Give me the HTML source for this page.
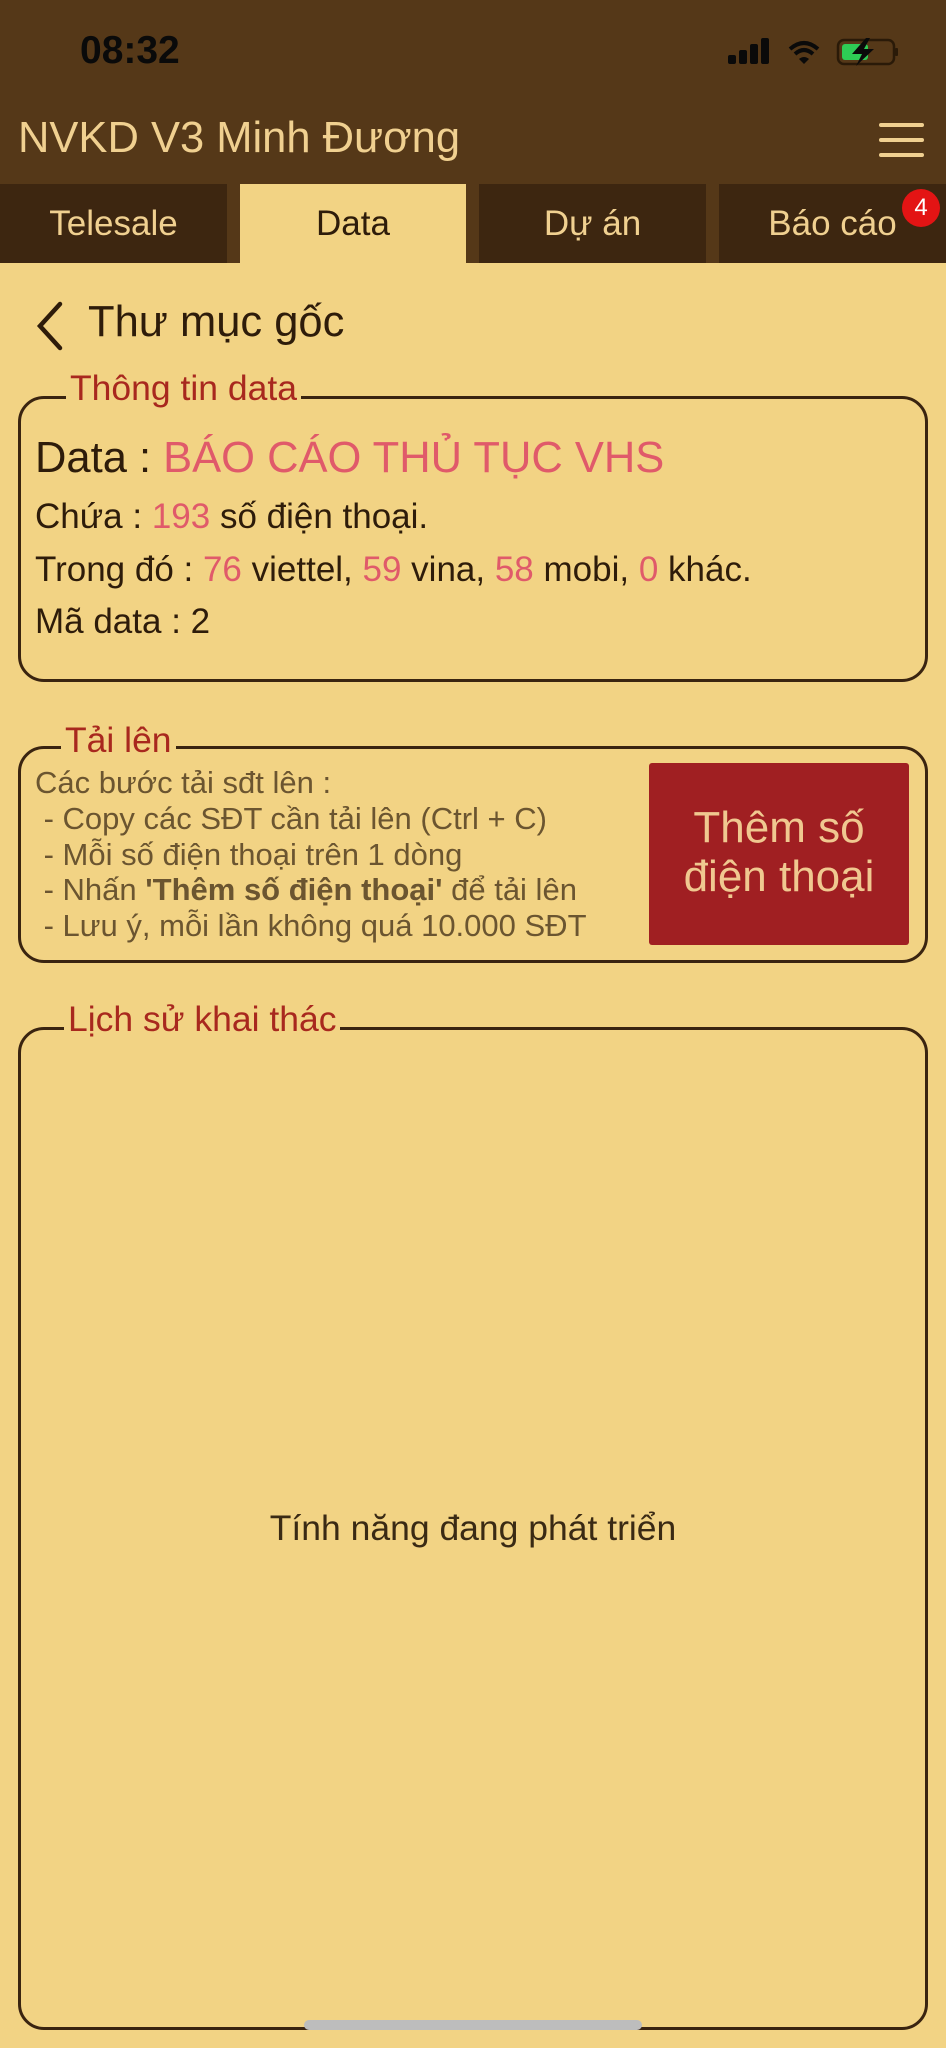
<!DOCTYPE html>
<html><head><meta charset="utf-8"><style>
*{margin:0;padding:0;box-sizing:border-box}
body{width:946px;height:2048px;background:#f2d384;font-family:"Liberation Sans",sans-serif;position:relative;overflow:hidden}
.a{position:absolute;white-space:nowrap}
.hdr{left:0;top:0;width:946px;height:263px;background:#553818}
.tab{top:184px;height:79px;background:#3d2610;color:#f0d090;font-size:35px;display:flex;align-items:center;justify-content:center}
.fs{border:3px solid #3a2410;border-radius:26px}
.lg{color:#a8281e;background:#f2d384;padding:0 4px;font-size:35.5px;line-height:40px}
.t{color:#2e1c0a}
.r{color:#e05a6a}
.s{color:#6b5530;font-size:31px}
</style></head><body>
<div class="a hdr"></div>
<div class="a" style="left:80px;top:29px;font-size:39px;font-weight:bold;color:#0a0a0a">08:32</div>
<svg class="a" style="left:728px;top:38px" width="170" height="28" viewBox="0 0 170 28">
<rect x="0" y="17" width="8" height="9" rx="2" fill="#0a0a0a"/>
<rect x="11" y="12" width="8" height="14" rx="2" fill="#0a0a0a"/>
<rect x="22" y="6" width="8" height="20" rx="2" fill="#0a0a0a"/>
<rect x="33" y="0" width="8" height="26" rx="2" fill="#0a0a0a"/>
<path d="M62 11 Q76 -1 90 11" stroke="#0a0a0a" stroke-width="4" fill="none"/>
<path d="M67 16 Q76 8 85 16" stroke="#0a0a0a" stroke-width="4" fill="none"/>
<path d="M71 21 L76 26 L81 21 Q76 17 71 21Z" fill="#0a0a0a"/>
<rect x="110" y="2" width="56" height="24" rx="6" fill="none" stroke="#2a1a08" stroke-width="2.5"/>
<rect x="114" y="6" width="26" height="16" rx="3" fill="#2ecc55"/>
<rect x="167" y="10" width="3" height="8" rx="1" fill="#2a1a08"/>
<path d="M138 0 L124 16 L134 16 L128 28 L146 11 L136 11 L142 0Z" fill="#0a0a0a"/>
</svg>
<div class="a" style="left:18px;top:114px;font-size:43.5px;color:#f0d090">NVKD V3 Minh Đương</div>
<div class="a" style="left:879px;top:123px;width:45px;height:4px;background:#f0d090;border-radius:2px"></div>
<div class="a" style="left:879px;top:138px;width:45px;height:4px;background:#f0d090;border-radius:2px"></div>
<div class="a" style="left:879px;top:153px;width:45px;height:4px;background:#f0d090;border-radius:2px"></div>
<div class="a tab" style="left:0;width:227px">Telesale</div>
<div class="a tab" style="left:240px;width:226px;background:#f2d384;color:#2e1c0a">Data</div>
<div class="a tab" style="left:479px;width:227px">Dự án</div>
<div class="a tab" style="left:719px;width:227px">Báo cáo</div>
<div class="a" style="left:902px;top:189px;width:38px;height:38px;border-radius:50%;background:#e31414;color:#fff;font-size:24px;line-height:38px;text-align:center">4</div>
<svg class="a" style="left:32px;top:300px" width="34" height="52"><path d="M28 4 L8 26 L28 48" stroke="#2e1c0a" stroke-width="4.5" fill="none" stroke-linecap="round"/></svg>
<div class="a t" style="left:88px;top:298px;font-size:43.5px">Thư mục gốc</div>

<div class="a fs" style="left:18px;top:396px;width:910px;height:286px"></div>
<div class="a lg" style="left:66px;top:368px">Thông tin data</div>
<div class="a t" style="left:35px;top:434px;font-size:43.5px">Data : <span class="r">BÁO CÁO THỦ TỤC VHS</span></div>
<div class="a t" style="left:35px;top:497px;font-size:35px">Chứa : <span class="r">193</span> số điện thoại.</div>
<div class="a t" style="left:35px;top:550px;font-size:35px">Trong đó : <span class="r">76</span> viettel, <span class="r">59</span> vina, <span class="r">58</span> mobi, <span class="r">0</span> khác.</div>
<div class="a t" style="left:35px;top:602px;font-size:35px">Mã data : 2</div>

<div class="a fs" style="left:18px;top:746px;width:910px;height:217px"></div>
<div class="a lg" style="left:61px;top:720px">Tải lên</div>
<div class="a s" style="left:35px;top:765px">Các bước tải sđt lên :</div>
<div class="a s" style="left:35px;top:801px">&nbsp;- Copy các SĐT cần tải lên (Ctrl + C)</div>
<div class="a s" style="left:35px;top:837px">&nbsp;- Mỗi số điện thoại trên 1 dòng</div>
<div class="a s" style="left:35px;top:872px">&nbsp;- Nhấn <b>'Thêm số điện thoại'</b> để tải lên</div>
<div class="a s" style="left:35px;top:908px">&nbsp;- Lưu ý, mỗi lần không quá 10.000 SĐT</div>
<div class="a" style="left:649px;top:763px;width:260px;height:182px;background:#a01f22;border-radius:3px;color:#f0c890;font-size:44px;line-height:49px;text-align:center;padding-top:40px;white-space:normal">Thêm số<br>điện thoại</div>

<div class="a fs" style="left:18px;top:1027px;width:910px;height:1003px"></div>
<div class="a lg" style="left:64px;top:999px">Lịch sử khai thác</div>
<div class="a t" style="left:0;width:946px;text-align:center;top:1508px;font-size:35.5px;color:#3a2a14">Tính năng đang phát triển</div>
<div class="a" style="left:304px;top:2020px;width:338px;height:10px;border-radius:5px;background:#bdbdbd"></div>
</body></html>
